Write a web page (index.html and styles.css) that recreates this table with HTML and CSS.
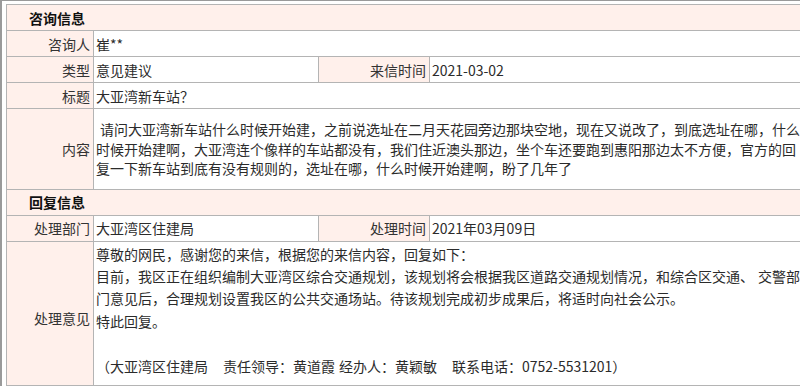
FILE: index.html
```html
<!DOCTYPE html>
<html lang="zh-CN">
<head>
<meta charset="utf-8">
<title>咨询信息</title>
<link rel="stylesheet" href="styles.css">
</head>
<body>
<div class="frame">
  <table class="info">
    <colgroup>
      <col class="c1"><col class="c2"><col class="c3"><col class="c4">
    </colgroup>
    <tr class="sec"><td colspan="4">咨询信息</td></tr>
    <tr class="row"><td class="lbl">咨询人</td><td colspan="3">崔**</td></tr>
    <tr class="row"><td class="lbl">类型</td><td>意见建议</td><td class="lbl">来信时间</td><td>2021-03-02</td></tr>
    <tr class="row"><td class="lbl">标题</td><td colspan="3">大亚湾新车站？</td></tr>
    <tr><td class="lbl">内容</td><td colspan="3" class="content"><span class="gap"></span>请问大亚湾新车站什么时候开始建，之前说选址在二月天花园旁边那块空地，现在又说改了，到底选址在哪，什么时候开始建啊，大亚湾连个像样的车站都没有，我们住近澳头那边，坐个车还要跑到惠阳那边太不方便，官方的回复一下新车站到底有没有规则的，选址在哪，什么时候开始建啊，盼了几年了</td></tr>
    <tr class="sec"><td colspan="4">回复信息</td></tr>
    <tr class="row"><td class="lbl">处理部门</td><td>大亚湾区住建局</td><td class="lbl">处理时间</td><td>2021年03月09日</td></tr>
    <tr><td class="lbl lbl-reply">处理意见</td><td colspan="3" class="reply">尊敬的网民，感谢您的来信，根据您的来信内容，回复如下：<br>目前，我区正在组织编制大亚湾区综合交通规划，该规划将会根据我区道路交通规划情况，和综合区交通、<span class="gap"></span>交警部门意见后，合理规划设置我区的公共交通场站。待该规划完成初步成果后，将适时向社会公示。<br>特此回复。<br><br>（大亚湾区住建局<span class="wide"></span>责任领导：黄道霞<span class="gap"></span>经办人：黄颖敏<span class="wide"></span>联系电话：0752-5531201）</td></tr>
  </table>
</div>
</body>
</html>
```
FILE: styles.css
```css
html, body {
  margin: 0;
  padding: 0;
  background: #fff;
}
body {
  font-family: "Noto Sans CJK SC", "Noto Sans", sans-serif;
  font-size: 14px;
  color: #2b2b2b;
  overflow: hidden;
}
.frame {
  border-top: 1px solid #9a9a9a;
  border-left: 2px solid #9a9a9a;
  padding: 3px 0 0 4px;
  width: 820px;
}
.info {
  border-collapse: collapse;
  table-layout: fixed;
  width: 801px;
  border: 1px solid #b4b4b4;
}
.c1 { width: 87px; }
.c2 { width: 225px; }
.c3 { width: 111px; }
.info td {
  border: 1px solid #b4b4b4;
  padding: 0 2px;
  line-height: 20px;
  vertical-align: middle;
}
.row td,
.sec td {
  height: 25px;
  padding-top: 0;
  padding-bottom: 0;
}
.sec td {
  background: #fff0eb;
  font-weight: bold;
  color: #111;
  padding-left: 22px;
}
.info td.lbl {
  background: #fff0eb;
  color: #333;
  text-align: right;
  padding-right: 3px;
}
.info td.content {
  line-height: 19.5px;
  padding-top: 11px;
  padding-bottom: 10px;
}
.info td.reply {
  line-height: 22.4px;
  padding-top: 1px;
  padding-bottom: 8px;
  vertical-align: top;
}
.info td.lbl-reply {
  padding-top: 10px;
}
.gap {
  display: inline-block;
  width: 4px;
}
.wide {
  display: inline-block;
  width: 15px;
}
```
